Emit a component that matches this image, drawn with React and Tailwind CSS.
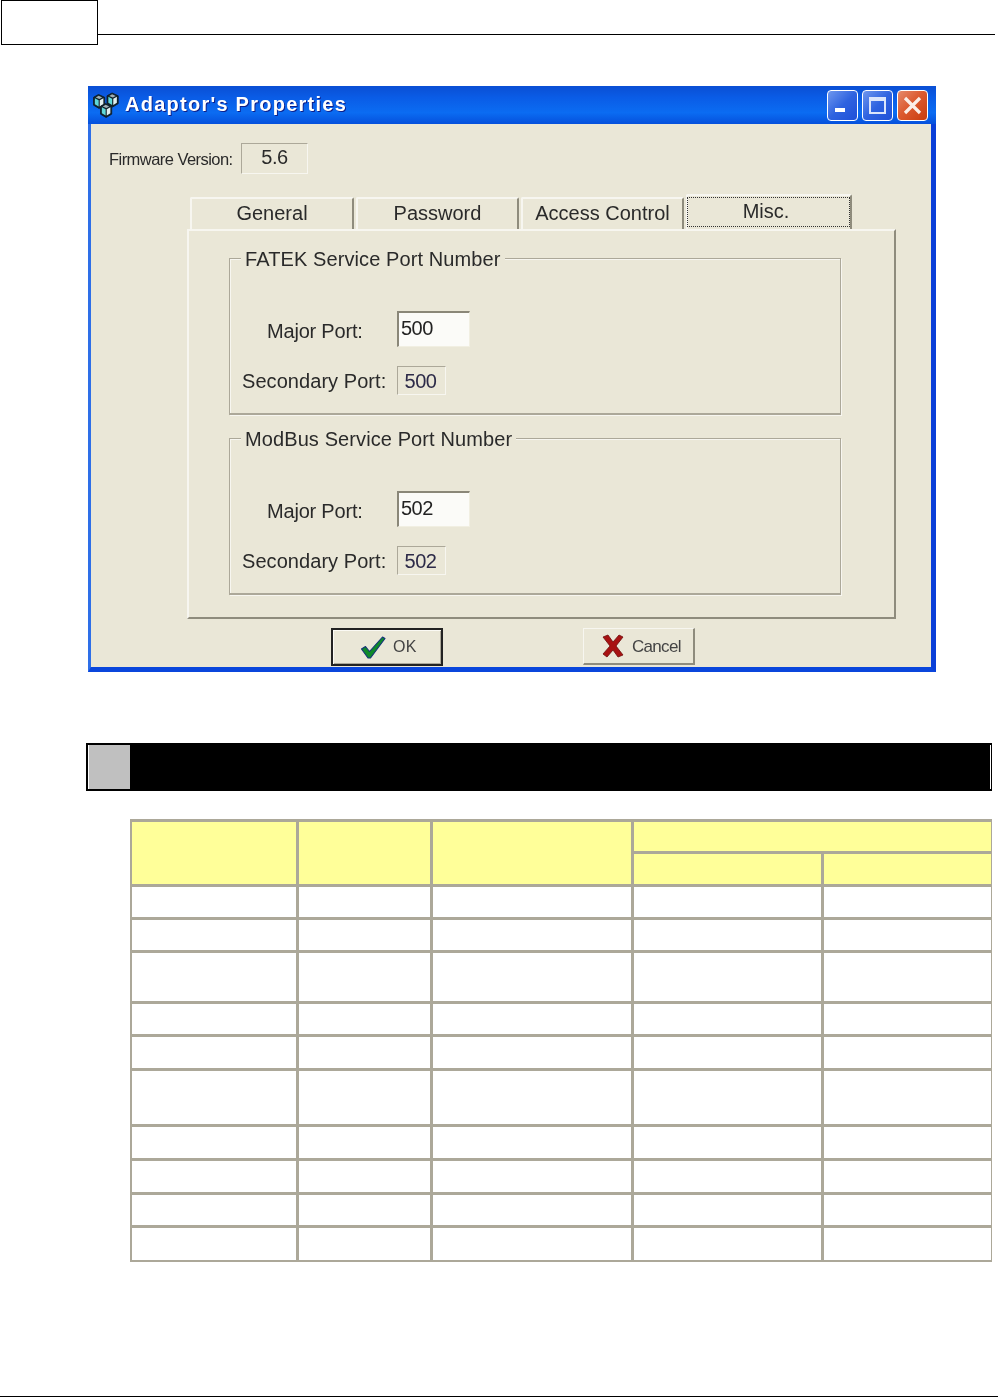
const font = { fontFamily: '"Liberation Sans", Arial, sans-serif' };

function PcIcon({ x, y }) {
  return (
    <g transform={`translate(${x} ${y}) scale(1.12)`}>
      <path d="M0 2.5 L4.5 0 L10 2.5 L10 9.5 L5 12.5 L0 9.5 Z" fill="#10202a" stroke="#10202a" strokeWidth="0.8" strokeLinejoin="round" />
      <path d="M1.2 3.4 L4.6 5.2 L4.6 10.8 L1.2 8.8 Z" fill="#5fd8d8" />
      <path d="M5.6 5.2 L8.8 3.4 L8.8 8.8 L5.6 10.8 Z" fill="#dfeeee" />
      <path d="M2 2.6 L4.6 1.2 L7.8 2.7 L5.2 4 Z" fill="#9fb0b6" />
    </g>
  );
}

function AppIcon() {
  return (
    <svg width="26" height="26" viewBox="0 0 26 26" className="shrink-0">
      <PcIcon x={0.5} y={2.5} />
      <PcIcon x={14} y={1} />
      <PcIcon x={7.5} y={11.5} />
    </svg>
  );
}

function TitleBtn({ kind }) {
  const bg =
    kind === 'close'
      ? 'bg-[linear-gradient(135deg,#e58a6c_0%,#dc5a30_45%,#c93c0e_100%)]'
      : 'bg-[linear-gradient(135deg,#6f97ee_0%,#2f63e0_50%,#1f50d8_100%)]';
  return (
    <div className={`w-[31px] h-[31px] rounded-[4px] border border-white flex items-center justify-center ${bg}`}>
      {kind === 'min' && <div className="w-[10px] h-[4px] bg-white mt-[9px] mr-[6px]" />}
      {kind === 'max' && <div className="w-[17px] h-[17px] border-[2px] border-t-[4px] border-[#dbe5fb]" />}
      {kind === 'close' && (
        <svg width="19" height="19" viewBox="0 0 19 19">
          <path d="M2 2 L17 17 M17 2 L2 17" stroke="#fbeee8" strokeWidth="3.2" />
        </svg>
      )}
    </div>
  );
}

function Tab({ label, width, active }) {
  return (
    <div
      className={`border-t-2 border-l-2 border-t-[#f7f6f0] border-l-[#f7f6f0] border-r-2 border-r-[#8f8c7d] rounded-t-[2px] flex items-center justify-center text-[20px] text-[#2a2a2a] ${
        active ? 'h-[35px] pb-[3px] pr-[6px]' : 'h-[32px] pb-[2px]'
      }`}
      style={{ width }}
    >
      {label}
    </div>
  );
}

function Sunken({ className, children }) {
  return (
    <div className={`border border-t-[#aca899] border-l-[#aca899] border-r-[#f7f6f0] border-b-[#f7f6f0] ${className}`}>
      {children}
    </div>
  );
}

function Group({ legend, major, secondary }) {
  return (
    <div className="relative h-[157px] border-2 border-t-[1px] border-l-[1px] border-r-[1px] border-[#aca899] shadow-[inset_1px_1px_0_#f7f6f0,1px_1px_0_#f7f6f0]">
      <div className="absolute top-[-12px] left-[11px] h-[24px] px-[4px] bg-[#eae7d7] text-[20px] leading-[24px] text-[#2a2a2a] whitespace-nowrap tracking-[0.1px]">
        {legend}
      </div>
      <div className="flex flex-col pt-[52px] gap-[19px]">
        <div className="flex items-center h-[36px] pl-[37px]">
          <div className="w-[130px] text-[20px] tracking-[-0.2px] text-[#2a2a2a] pt-[4px]">Major Port:</div>
          <div className="w-[73px] h-[36px] border-t-2 border-l-2 border-t-[#8a8778] border-l-[#8a8778] border-r border-b border-r-[#f1efe2] border-b-[#f1efe2] bg-[#fbfbf8] pl-[2px] text-[20px] leading-[30px] tracking-[-0.5px] text-[#222]">
            {major}
          </div>
        </div>
        <div className="flex items-center h-[29px] pl-[12px]">
          <div className="w-[155px] text-[20px] tracking-[0.06px] text-[#2a2a2a]">Secondary Port:</div>
          <Sunken className="w-[49px] h-[29px] flex items-center justify-center text-[20px] tracking-[-0.5px] pr-[2px] text-[#2c2a48]">{secondary}</Sunken>
        </div>
      </div>
    </div>
  );
}

function Dialog() {
  return (
    <div className="ml-[88px] mt-[41px] w-[848px] h-[586px] flex flex-col blur-[0.35px]" style={font}>
      <div className="h-[38px] shrink-0 flex items-center pl-[5px] pr-[8px] bg-[linear-gradient(180deg,#0a4fd4_0%,#0a5ce6_30%,#0b6cf2_70%,#0550dc_100%)]">
        <AppIcon />
        <div className="ml-[6px] flex-1 text-[20px] font-bold tracking-[1.25px] text-white pb-[2px] [text-shadow:1px_1px_0_#0f1f89]">
          Adaptor's Properties
        </div>
        <div className="flex gap-[4px]">
          <TitleBtn kind="min" />
          <TitleBtn kind="max" />
          <TitleBtn kind="close" />
        </div>
      </div>
      <div className="flex-1 flex flex-col border-l-[3px] border-r-[5px] border-b-[5px] border-l-[#2e6fe8] border-r-[#0a3fd8] border-b-[#0a46dc] bg-[#eae7d7]">
        <div className="flex items-center mt-[19px] ml-[18px] h-[31px]">
          <div className="w-[132px] whitespace-nowrap text-[16.5px] tracking-[-0.55px] text-[#2a2a2a] pt-[2px]">Firmware Version:</div>
          <Sunken className="w-[67px] h-[31px] flex items-center justify-center text-[20px] tracking-[-0.4px] text-[#2a2a2a] pb-[3px]">5.6</Sunken>
        </div>
        <div className="flex items-end mt-[20px] ml-[99px] h-[35px] gap-[2px]">
          <Tab label="General" width={164} />
          <Tab label="Password" width={163} />
          <Tab label="Access Control" width={163} />
          <div className="relative">
            <Tab label="Misc." width={166} active />
            <div className="absolute left-[1px] top-[3px] w-[163px] h-[30px] border border-dotted border-[#333]" />
          </div>
        </div>
        <div className="ml-[96px] w-[709px] h-[390px] border-t-2 border-l-2 border-t-[#f7f6f0] border-l-[#f7f6f0] border-r-2 border-b-2 border-r-[#8f8c7d] border-b-[#8f8c7d] pt-[27px] pl-[40px] flex flex-col gap-[23px]">
          <div className="w-[612px]">
            <Group legend="FATEK Service Port Number" major="500" secondary="500" />
          </div>
          <div className="w-[612px]">
            <Group legend="ModBus Service Port Number" major="502" secondary="502" />
          </div>
        </div>
        <div className="flex mt-[9px] ml-[240px] gap-[140px]">
          <div className="w-[112px] h-[38px] border-2 border-[#222] flex items-center pl-[27px] gap-[7px] shadow-[inset_1px_1px_0_#fbfaf4,inset_-1px_-1px_0_#aca899] text-[16px] text-[#444]">
            <svg width="26" height="24" viewBox="0 0 26 24">
              <path d="M1.5 14 L5.5 11.5 L9.5 16.5 L22.5 2 L25 3.5 L10.5 23 L8 23 Z" fill="#0f8a2a" stroke="#14307a" strokeWidth="1.1" strokeLinejoin="round" />
            </svg>
            <span className="tracking-[0.2px]">OK</span>
          </div>
          <div className="w-[112px] h-[37px] border border-[#f7f6f0] border-r-2 border-b-2 border-r-[#8f8c7d] border-b-[#8f8c7d] flex items-center pl-[18px] gap-[8px] text-[17px] tracking-[-0.7px] text-[#444]">
            <svg width="22" height="24" viewBox="0 0 22 24">
              <path d="M1 3 L6 1 L11 8 L17 1 L21 3 L14 12 L21 21 L16 23 L11 16 L5 23 L1 20 L8 12 Z" fill="#a81212" stroke="#6e0c0c" strokeWidth="0.8" strokeLinejoin="round" />
            </svg>
            <span className="pt-[2px]">Cancel</span>
          </div>
        </div>
      </div>
    </div>
  );
}

function Cell({ className = '' }) {
  return <div className={`bg-white ${className}`} />;
}

const HEAD = 'bg-[#ffff99] row-span-2';
const rows = Array.from({ length: 10 });

function DataTable() {
  return (
    <div className="ml-[130px] mt-[28px] w-[862px] bg-[#aca899] pt-[3px] pl-[2px] pr-px pb-[2px] grid grid-cols-[164px_131px_198px_187px_167px] grid-rows-[29px_30px_30px_30px_48px_30px_31px_53px_31px_31px_30px_32px] gap-x-[3px] gap-y-[3px]">
      <div className={HEAD} />
      <div className={HEAD} />
      <div className={HEAD} />
      <div className="bg-[#ffff99] col-span-2" />
      <div className="bg-[#ffff99]" />
      <div className="bg-[#ffff99]" />
      {rows.map((_, i) => (
        <div key={i} className="contents">
          <Cell />
          <Cell />
          <Cell />
          <Cell />
          <Cell />
        </div>
      ))}
    </div>
  );
}

export default function App() {
  return (
    <div className="w-[999px] h-[1397px] bg-white overflow-hidden flex flex-col">
      <div className="flex items-start ml-px w-[994px]">
        <div className="w-[97px] h-[45px] border border-black shrink-0" />
        <div className="flex-1 h-px bg-black mt-[34px]" />
      </div>
      <Dialog />
      <div className="ml-[86px] mt-[71px] w-[906px] h-[48px] bg-black flex py-[2px] pl-[2px] pr-px">
        <div className="w-[42px] border-l border-white bg-[#c0c0c0]" />
        <div className="flex-1" />
        <div className="w-px bg-white" />
      </div>
      <DataTable />
      <div className="mt-auto w-[998px] h-px bg-black" />
    </div>
  );
}
